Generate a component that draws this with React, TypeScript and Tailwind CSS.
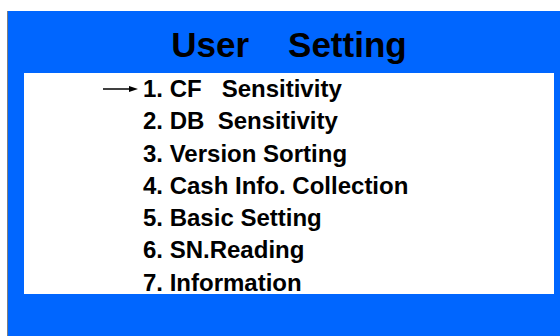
const items = [
  '1. CF   Sensitivity',
  '2. DB  Sensitivity',
  '3. Version Sorting',
  '4. Cash Info. Collection',
  '5. Basic Setting',
  '6. SN.Reading',
  '7. Information',
];

function Arrow() {
  return (
    <svg width="36" height="10" viewBox="0 0 36 10" className="block">
      <line x1="0" y1="5" x2="30" y2="5" stroke="#000" strokeWidth="1.5" />
      <path d="M26 2 L35 5 L26 8 Z" fill="#000" />
    </svg>
  );
}

export default function App() {
  const selected = 0;

  return (
    <div className="w-[560px] h-[336px] bg-white pt-[11px] pl-[7px] font-['Liberation_Sans',Arial,sans-serif] font-bold text-black">
      <div className="h-full border-l border-[#7f7f7f] bg-[#0066ff] pl-[16px] pr-[6px]">
        {/* Title */}
        <div className="h-[65px] pt-[2px] text-center text-[35px] leading-[63px] whitespace-pre">
          User    Setting
        </div>

        {/* Menu */}
        <div className="bg-white h-[221px]">
          <ul className="-mt-[3px]">
            {items.map((label, i) => (
              <li key={label} className="flex items-center h-[32.3px] pl-[79px] text-[24px] leading-[32.3px]">
                <span className="w-[40px] flex items-center">{i === selected && <Arrow />}</span>
                <span className="whitespace-pre">{label}</span>
              </li>
            ))}
          </ul>
        </div>
      </div>
    </div>
  );
}
